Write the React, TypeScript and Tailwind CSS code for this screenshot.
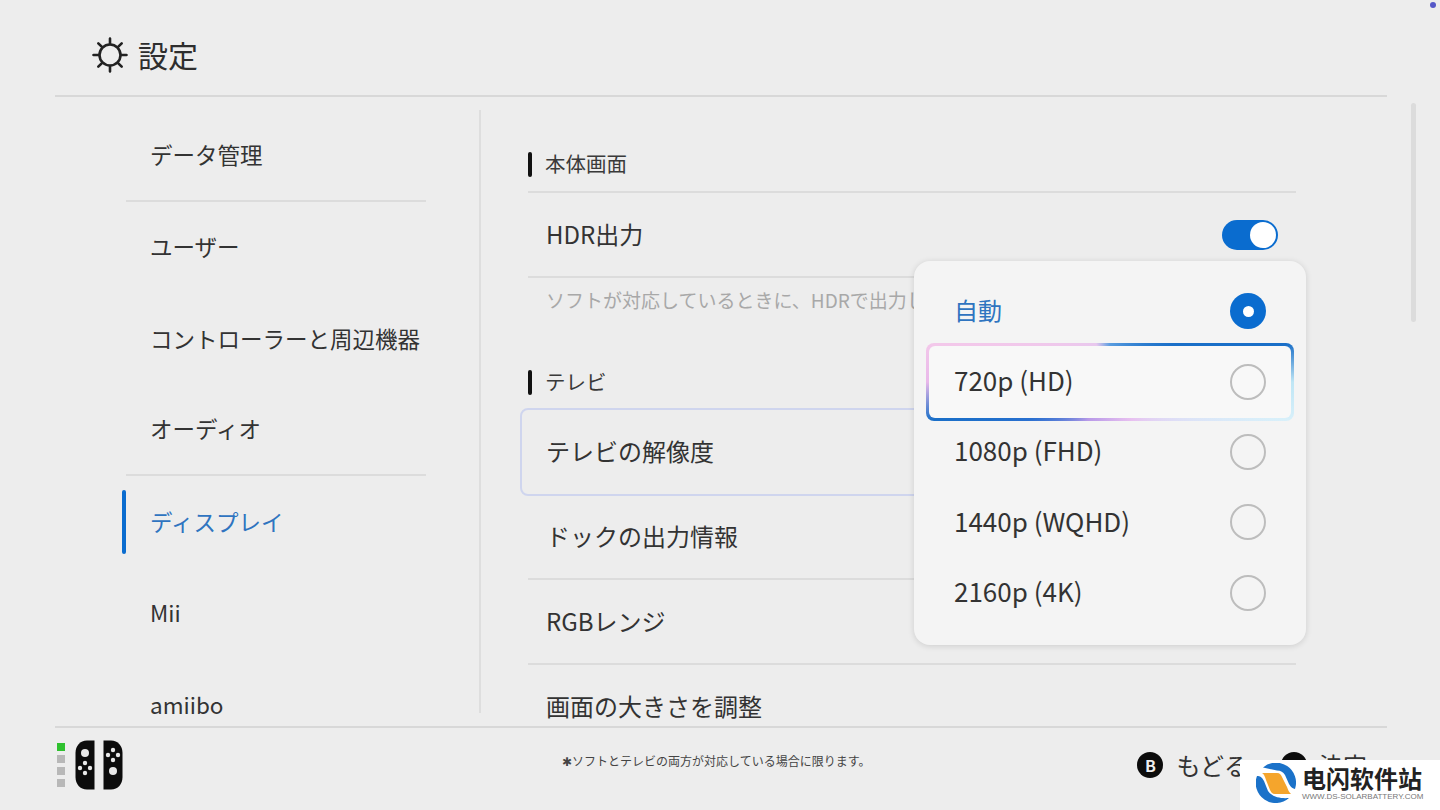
const jp = `font-["Noto_Sans_CJK_JP",sans-serif]`;

const menu = [
  { label: "データ管理", divider: true },
  { label: "ユーザー" },
  { label: "コントローラーと周辺機器" },
  { label: "オーディオ", divider: true },
  { label: "ディスプレイ", active: true },
  { label: "Mii" },
  { label: "amiibo" },
];

const options = [
  { label: "自動", selected: true },
  { label: "720p (HD)", focused: true },
  { label: "1080p (FHD)" },
  { label: "1440p (WQHD)" },
  { label: "2160p (4K)" },
];

const SunIcon = () => (
  <svg width="36" height="36" viewBox="0 0 36 36" fill="none" stroke="#222" strokeWidth="2.6" strokeLinecap="round">
    <circle cx="18" cy="18" r="10.5" />
    <path d="M18 1.5v5.5M18 29v5.5M1.5 18H7M29 18h5.500M6.300 6.300l3.900 3.900M25.800 25.800l3.900 3.900M29.700 6.300l-3.900 3.900M10.200 25.800l-3.900 3.900" />
  </svg>
);

const JoyCons = () => (
  <svg width="48" height="50" viewBox="0 0 48 50">
    <path d="M19.500 0.500H12C5 0.500 0.500 6 0.500 13v24c0 7 4.500 12.500 11.500 12.500h7.500z" fill="#0c0c0c" />
    <path d="M28.500 0.500H36c7 0 11.500 5.500 11.500 12.500v24c0 7-4.500 12.500-11.500 12.500h-7.500z" fill="#0c0c0c" />
    <g fill="#e8e8e8">
      <circle cx="10" cy="13" r="4" />
      <circle cx="10" cy="23" r="2.200" />
      <circle cx="5" cy="28" r="2.200" />
      <circle cx="15" cy="28" r="2.200" />
      <circle cx="10" cy="33" r="2.200" />
      <circle cx="38" cy="10" r="2.200" />
      <circle cx="33" cy="15" r="2.200" />
      <circle cx="43" cy="15" r="2.200" />
      <circle cx="38" cy="20" r="2.200" />
      <circle cx="38" cy="31" r="4" />
    </g>
  </svg>
);

const Logo = () => (
  <svg width="40" height="40" viewBox="0 0 40 40">
    <path d="M7 4.500A20 20 0 0 1 39 26C37 25.500 35 24.500 33 21L29 12C27 9 25 7.500 21 7.500Z" fill="#1b72c9" />
    <path d="M1 13A20 20 0 0 0 33 35C26 35.500 17 35 12 28L8 18C6 14 4 13 1 13Z" fill="#1b72c9" />
    <path d="M6 10H21C24 10 25 12 26 14L31 24C32 27 33 29 35 31H19C16 31 15 29 14 27L10 17C9 14 8 11 6 10Z" fill="#f5a52c" />
  </svg>
);

const Radio = ({ selected }: { selected?: boolean }) =>
  selected ? (
    <span className="flex h-9 w-9 items-center justify-center rounded-full bg-[#0a6ccf]">
      <span className="h-[11px] w-[11px] rounded-full bg-white" />
    </span>
  ) : (
    <span className="h-9 w-9 rounded-full border-2 border-[#bdbdbd]" />
  );

const Heading = ({ label, line }: { label: string; line?: boolean }) => (
  <div className={`flex h-14 items-center gap-[13px] ${line ? "border-b-2 border-[#dcdcdc]" : ""}`}>
    <span className="h-[25px] w-1 rounded-sm bg-[#111]" />
    <span className="pb-[1px] text-[20.500px] text-[#3a3a3a]">{label}</span>
  </div>
);

const Row = ({ label }: { label: string }) => (
  <div className="flex h-[85px] items-center border-b-2 border-[#dcdcdc] pb-[2px] pl-[18px] text-[24px] text-[#333]">{label}</div>
);

const App = () => {
  return (
    <div className={`relative flex h-[810px] w-[1440px] flex-col overflow-hidden bg-[#ededed] ${jp}`}>
      <span className="absolute top-[2px] right-[4px] h-[6px] w-[6px] rounded-full bg-[#5558c8]" />

      <header className="mr-[53px] ml-[55px] flex h-[97px] items-center gap-[10px] border-b-2 border-[#d8d8d8] pt-[15px] pl-[37px]">
        <SunIcon />
        <span className="pb-[2px] text-[30px] text-[#2e2e2e]">設定</span>
      </header>

      <main className="ml-[55px] flex h-[629px]">
        <nav className="w-[424px] pt-[13px] pl-[71px]">
          {menu.map((item) => (
            <div
              key={item.label}
              className={`flex h-[91.500px] w-[300px] items-center text-[22.500px] ${
                item.divider ? "border-b-2 border-[#dcdcdc]" : ""
              } ${item.active ? "-ml-1 text-[#2f74c0]" : "text-[#333]"}`}
            >
              {item.active && <span className="mr-6 h-[64px] w-1 rounded-sm bg-[#0a6ccf]" />}
              <span className={item.active ? "" : "pl-6"}>{item.label}</span>
            </div>
          ))}
        </nav>
        <div className="my-[13px] w-[2px] bg-[#dedede]" />

        <section className="ml-[39px] w-[784px] overflow-hidden px-2 pt-10">
          <Heading label="本体画面" line />
          <div className="flex h-[85px] items-center justify-between border-b-2 border-[#dcdcdc] px-[18px]">
            <span className="pb-[2px] text-[24px] text-[#333]">HDR出力</span>
            <span className="flex h-[30px] w-14 items-center justify-end rounded-full bg-[#0a6ccf] pr-[2px]">
              <span className="h-[26px] w-[26px] rounded-full bg-white" />
            </span>
          </div>
          <p className="flex h-11 items-center pl-[18px] text-[19px] text-[#a8a8a8]">
            ソフトが対応しているときに、HDRで出力します。
          </p>

          <div className="mt-8">
            <Heading label="テレビ" />
          </div>
          <div className="-mx-2 -mt-[2px] -mb-[1px] flex h-[88px] items-center rounded-lg border-2 border-[#cfd5ee] pb-[2px] pl-[24px] text-[24px] text-[#333]">
            テレビの解像度
          </div>
          <Row label="ドックの出力情報" />
          <Row label="RGBレンジ" />
          <Row label="画面の大きさを調整" />
        </section>

        <div className="mt-[6px] ml-[107px] h-[219px] w-[5px] rounded-full bg-[#dcdcdc]" />
      </main>

      <footer className="mr-[53px] ml-[55px] flex flex-1 items-center border-t-2 border-[#d8d8d8] pr-5 pb-2 pl-[2px]">
        <div className="flex flex-col gap-1">
          <span className="h-2 w-2 bg-[#2fc12f]" />
          <span className="h-2 w-2 bg-[#b8b8b8]" />
          <span className="h-2 w-2 bg-[#b8b8b8]" />
          <span className="h-2 w-2 bg-[#b8b8b8]" />
        </div>
        <div className="ml-[10px]">
          <JoyCons />
        </div>
        <span className="mb-2 ml-[439px] text-[12px] text-[#444]">✱ソフトとテレビの両方が対応している場合に限ります。</span>
        <div className="ml-auto flex items-center gap-3">
          <span className="mr-[1px] flex h-[26px] w-[26px] items-center justify-center rounded-full bg-[#0c0c0c] text-[16px] font-bold text-[#eee]">
            B
          </span>
          <span className="text-[24px] text-[#333]">もどる</span>
          <span className="ml-[21px] flex h-[26px] w-[26px] items-center justify-center rounded-full bg-[#0c0c0c] text-[16px] font-bold text-[#eee]">
            A
          </span>
          <span className="text-[24px] text-[#333]">決定</span>
        </div>
      </footer>

      <div className="absolute top-[261px] left-[914px] flex h-[384px] w-[392px] flex-col rounded-2xl bg-[#f4f4f4] px-3 pt-[15px] shadow-[0_1px_6px_rgba(0,0,0,0.14)]">
        {options.map((o) =>
          o.focused ? (
            <div
              key={o.label}
              className="-my-1 h-[78px] rounded-lg bg-[conic-gradient(#5a9de0_0deg,#1a6fc8_60deg,#1a6fc8_78deg,#bfe6f5_90deg,#d8f0fa_102deg,#e8c0f0_150deg,#b99ae8_210deg,#2a70d0_245deg,#1a6fc8_258deg,#e9b8ea_270deg,#f3c8ea_282deg,#e8c8ee_340deg,#5a9de0_360deg)] p-[3px]"
            >
              <div className="flex h-full items-center justify-between rounded-md bg-[#f8f8f8] px-[25px] text-[26px] text-[#333]">
                <span className="pb-1">{o.label}</span>
                <Radio />
              </div>
            </div>
          ) : (
            <div
              key={o.label}
              className={`flex h-[70.500px] items-center justify-between px-7 ${
                o.selected ? "text-[24px] text-[#2f74c0]" : "text-[26px] text-[#333]"
              }`}
            >
              <span className={o.selected ? "pb-[2px]" : "pb-1"}>{o.label}</span>
              <Radio selected={o.selected} />
            </div>
          )
        )}
      </div>

      <div className="absolute right-0 bottom-0 flex h-[50px] w-[200px] items-center gap-[6px] bg-white pb-1 pl-[16px]">
        <Logo />
        <div className="flex flex-col">
          <span className={`text-[24px] leading-[28px] font-bold text-[#222] font-["Noto_Sans_CJK_SC",sans-serif]`}>电闪软件站</span>
          <span className={`text-[8px] leading-[10px] text-[#777] font-["Liberation_Sans",sans-serif]`}>WWW.DS-SOLARBATTERY.COM</span>
        </div>
      </div>
    </div>
  );
};

export default App;
